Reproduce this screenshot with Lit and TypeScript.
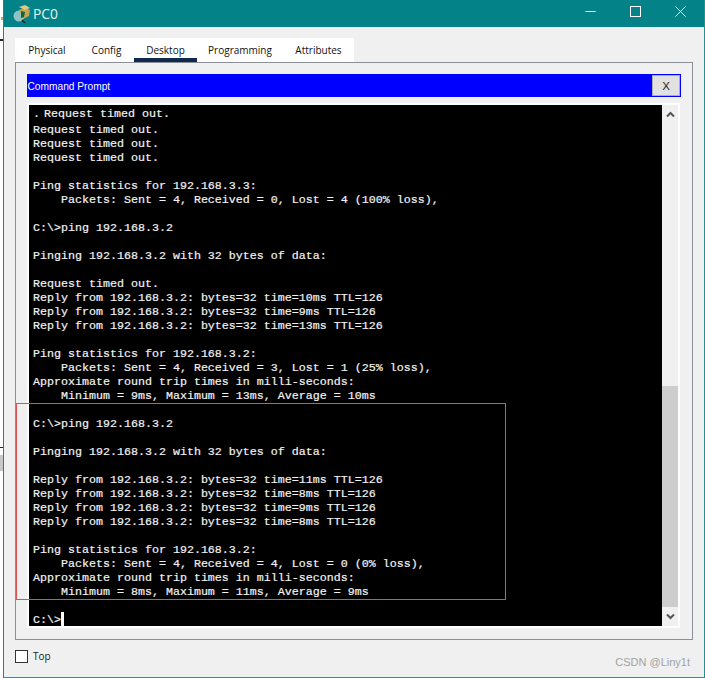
import { LitElement, html, css } from "lit";
import { customElement } from "lit/decorators.js";

const LINES = [
  "Request timed out.",
  "Request timed out.",
  "Request timed out.",
  "",
  "Ping statistics for 192.168.3.3:",
  "    Packets: Sent = 4, Received = 0, Lost = 4 (100% loss),",
  "",
  "C:\\>ping 192.168.3.2",
  "",
  "Pinging 192.168.3.2 with 32 bytes of data:",
  "",
  "Request timed out.",
  "Reply from 192.168.3.2: bytes=32 time=10ms TTL=126",
  "Reply from 192.168.3.2: bytes=32 time=9ms TTL=126",
  "Reply from 192.168.3.2: bytes=32 time=13ms TTL=126",
  "",
  "Ping statistics for 192.168.3.2:",
  "    Packets: Sent = 4, Received = 3, Lost = 1 (25% loss),",
  "Approximate round trip times in milli-seconds:",
  "    Minimum = 9ms, Maximum = 13ms, Average = 10ms",
  "",
  "C:\\>ping 192.168.3.2",
  "",
  "Pinging 192.168.3.2 with 32 bytes of data:",
  "",
  "Reply from 192.168.3.2: bytes=32 time=11ms TTL=126",
  "Reply from 192.168.3.2: bytes=32 time=8ms TTL=126",
  "Reply from 192.168.3.2: bytes=32 time=9ms TTL=126",
  "Reply from 192.168.3.2: bytes=32 time=8ms TTL=126",
  "",
  "Ping statistics for 192.168.3.2:",
  "    Packets: Sent = 4, Received = 4, Lost = 0 (0% loss),",
  "Approximate round trip times in milli-seconds:",
  "    Minimum = 8ms, Maximum = 11ms, Average = 9ms",
  "",
];

@customElement("app-root")
export class AppRoot extends LitElement {
  static styles = css`
    :host {
      display: block;
      width: 705px;
      height: 678px;
      position: relative;
      overflow: hidden;
      background: #fff;
      font-family: "Liberation Sans", Arial, sans-serif;
    }
    .window {
      height: 678px;
      margin-left: 3px;
      border-left: 1px solid #2f7f82;
      border-right: 1px solid #1f8f93;
      border-bottom: 1px solid #2f8f92;
      box-sizing: border-box;
      background: #f0f0f0;
      display: flex;
      flex-direction: column;
    }
    .titlebar {
      height: 27px;
      background: #038387;
      display: flex;
      align-items: center;
      color: #fff;
      flex: none;
    }
    .app-icon { margin-left: 8px; width: 18px; height: 20px; flex: none; }
    .title { margin-left: 3px; font-family: "Open Sans", sans-serif; font-size: 13.8px; color: #e6f4f4; }
    .caps { margin-left: auto; margin-right: 1px; display: flex; align-self: flex-start; }
    .cap { width: 45px; height: 22px; display: flex; align-items: center; justify-content: center; }
    .body {
      flex: 1;
      padding: 11px 11px 0 11px;
      display: flex;
      flex-direction: column;
      min-height: 0;
    }
    .tabs {
      display: flex;
      align-self: flex-start;
      background: #fff;
      height: 24px;
    }
    .tab {
      font-family: "Open Sans", sans-serif;
      font-size: 10px;
      color: #111;
      text-align: center;
      line-height: 24px;
      position: relative;
      box-sizing: border-box;
    }
    .t0 { width: 64px; }
    .t1 { width: 55px; }
    .t2 { width: 63px; }
    .t3 { width: 86px; }
    .t4 { width: 71px; }
    .tab.on::after {
      content: "";
      position: absolute;
      left: 0;
      right: 0;
      bottom: 0;
      height: 4px;
      background: #12294f;
    }
    .panel {
      height: 578px;
      box-sizing: border-box;
      border: 1px solid #8a9096;
      padding: 11px 11px 0 11px;
      display: flex;
      flex-direction: column;
      flex: none;
    }
    .cmdbar {
      height: 23px;
      background: #0000ff;
      display: flex;
      align-items: center;
      justify-content: space-between;
      color: #fff;
      font-size: 10.2px;
      padding: 1px 1px 0 0;
      box-sizing: border-box;
      flex: none;
    }
    .cmdbar span { margin-left: 0.5px; }
    .x {
      width: 28px;
      height: 21px;
      margin-top: -1px;
      background: #e1e1e1;
      border: 1px solid #adadad;
      box-sizing: border-box;
      color: #222;
      font-size: 11.5px;
      text-align: center;
      line-height: 20px;
    }
    .term {
      margin-top: 6px;
      height: 525px;
      width: 653px;
      box-sizing: border-box;
      border: 2px solid #fff;
      display: flex;
      flex: none;
      background: #fff;
    }
    .screen {
      flex: 1;
      background: #000;
      color: #f2f2f2;
      font-family: "Liberation Mono", monospace;
      font-size: 11.67px;
      line-height: 14px;
      padding: 2px 0 0 4px;
      overflow: hidden;
      white-space: pre;
      -webkit-text-stroke: 0.2px #f2f2f2;
    }
    .line { height: 14px; }
    .first { height: 16px; }
    .dot { display: inline-block; width: 11px; }
    .cursor {
      display: inline-block;
      width: 3px;
      height: 15px;
      margin-top: -1px;
      background: #fff;
      vertical-align: top;
    }
    .scroll {
      width: 16px;
      background: #f0f0f0;
      display: flex;
      flex-direction: column;
      flex: none;
    }
    .arrow { height: 19px; display: flex; align-items: center; justify-content: center; flex: none; }
    .track { flex: 1; display: flex; flex-direction: column; }
    .thumb { margin-top: 262px; height: 221px; background: #cdcdcd; }
    .footer {
      display: flex;
      align-items: center;
      gap: 5px;
      margin-top: 9px;
      font-family: "Open Sans", sans-serif;
      font-size: 10px;
      color: #222;
    }
    .check {
      width: 13px;
      height: 13px;
      box-sizing: border-box;
      border: 1px solid #333;
      background: #fff;
    }
    .redbox {
      position: absolute;
      left: 16px;
      top: 403px;
      width: 490px;
      height: 197px;
      box-sizing: border-box;
      border: 1px solid #e25050;
      pointer-events: none;
    }
    .watermark {
      position: absolute;
      right: 15px;
      top: 655px;
      font-size: 11px;
      line-height: 14px;
      color: #a2a2a2;
    }
    .desk {
      position: absolute;
      left: 0;
      top: 0;
      width: 3px;
      height: 678px;
      background:
        linear-gradient(#222, #222) 0 39px / 3px 2px no-repeat,
        linear-gradient(#d9a066, #d9a066) 1px 17px / 2px 3px no-repeat,
        linear-gradient(#222, #222) 0 447px / 3px 1px no-repeat,
        linear-gradient(#c8c8c8, #c8c8c8) 0 455px / 3px 16px no-repeat,
        #fff;
    }
  `;

  render() {
    return html`
      <div class="desk"></div>
      <div class="window">
        <div class="titlebar">
          <svg class="app-icon" viewBox="0 0 18 20">
            <circle cx="7" cy="12" r="5.5" fill="#8fc4c6"/>
            <path d="M7 6 L13 4 L18 6 L17 12 L11 15 Z" fill="#c9a25a"/>
            <path d="M7 3 L13 1 L18 4 L13 6 Z" fill="#e2c77f"/>
            <path d="M9 7 L13 8 L12 13 L9 14 Z" fill="#14672f"/>
            <path d="M10 16 L13 19" stroke="#222" stroke-width="1.5"/>
          </svg>
          <span class="title">PC0</span>
          <div class="caps">
            <div class="cap">
              <svg width="11" height="11" viewBox="0 0 11 11"><path d="M0.5 5.5H10.5" stroke="#fff" stroke-width="1"/></svg>
            </div>
            <div class="cap">
              <svg width="11" height="11" viewBox="0 0 11 11"><rect x="0.5" y="0.5" width="10" height="10" fill="none" stroke="#fff"/></svg>
            </div>
            <div class="cap">
              <svg width="11" height="11" viewBox="0 0 11 11"><path d="M0.5 0.5L10.5 10.5M10.5 0.5L0.5 10.5" stroke="#fff" stroke-width="1"/></svg>
            </div>
          </div>
        </div>
        <div class="body">
          <div class="tabs">
            <div class="tab t0">Physical</div>
            <div class="tab t1">Config</div>
            <div class="tab t2 on">Desktop</div>
            <div class="tab t3">Programming</div>
            <div class="tab t4">Attributes</div>
          </div>
          <div class="panel">
            <div class="cmdbar"><span>Command Prompt</span><div class="x">X</div></div>
            <div class="term">
              <div class="screen"><div class="line first"><span class="dot">.</span>Request timed out.</div>${LINES.map((l) => html`<div class="line">${l}</div>`)}<div class="line">C:\\&gt;<span class="cursor"></span></div></div>
              <div class="scroll">
                <div class="arrow">
                  <svg width="9" height="7" viewBox="0 0 9 7"><path d="M1 5.5L4.5 2L8 5.5" fill="none" stroke="#555" stroke-width="2"/></svg>
                </div>
                <div class="track"><div class="thumb"></div></div>
                <div class="arrow">
                  <svg width="9" height="7" viewBox="0 0 9 7"><path d="M1 1.5L4.5 5L8 1.5" fill="none" stroke="#555" stroke-width="2"/></svg>
                </div>
              </div>
            </div>
          </div>
          <label class="footer"><span class="check"></span>Top</label>
        </div>
      </div>
      <div class="redbox"></div>
      <div class="watermark">CSDN @Liny1t</div>
    `;
  }
}
